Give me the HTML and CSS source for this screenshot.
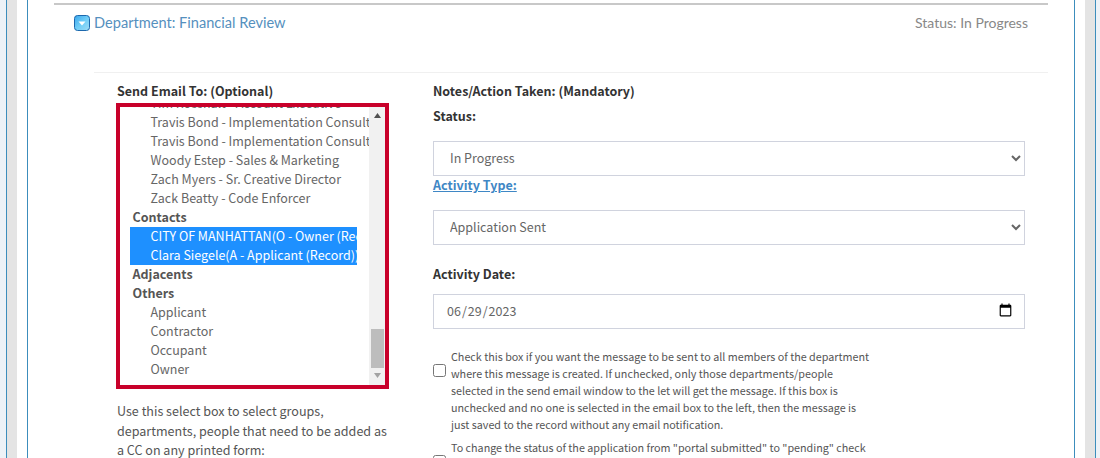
FILE: index.html
```html
<!DOCTYPE html>
<html lang="en">
<head>
    <meta charset="UTF-8"/>
    <title>Department: Financial Review</title>
    <link rel="stylesheet" href="styles.css">
</head>
<body>
<div class="page">
    <div class="shell">
        <div class="sheet">
            <div class="card">
                <div class="dept">
                    <div class="dept-head">
                        <a class="dept-title" href="#">
                            <svg class="toggle" width="16" height="16" viewBox="0 0 16 16">
                                <defs>
                                    <linearGradient id="tg" x1="0" y1="0" x2="1" y2="1">
                                        <stop offset="0" stop-color="#3aa6ec"/>
                                        <stop offset="0.5" stop-color="#6fcdf7"/>
                                        <stop offset="1" stop-color="#9fdcf5"/>
                                    </linearGradient>
                                </defs>
                                <rect x="0.5" y="0.5" width="15" height="15" rx="3" fill="url(#tg)" stroke="#1c68ad"/>
                                <path d="M4.5 6.5h7L8 10.5z" fill="#fff"/>
                            </svg>
                            Department: Financial Review
                        </a>
                        <span class="dept-status">Status: In Progress</span>
                    </div>
                    <div class="dept-body">
                        <div class="col-left">
                            <label class="lbl">Send Email To: (Optional)</label>
                            <div class="list-box">
                                <div class="list-view">
                                    <div class="list-scroll">
                                        <div class="opt">Tim Rosshalt - Account Executive</div>
                                        <div class="opt">Travis Bond - Implementation Consultant</div>
                                        <div class="opt">Travis Bond - Implementation Consultant</div>
                                        <div class="opt">Woody Estep - Sales &amp; Marketing</div>
                                        <div class="opt">Zach Myers - Sr. Creative Director</div>
                                        <div class="opt">Zack Beatty - Code Enforcer</div>
                                        <div class="grp">Contacts</div>
                                        <div class="opt sel">CITY OF MANHATTAN(O - Owner (Record))</div>
                                        <div class="opt sel">Clara Siegele(A - Applicant (Record))</div>
                                        <div class="grp">Adjacents</div>
                                        <div class="grp">Others</div>
                                        <div class="opt">Applicant</div>
                                        <div class="opt">Contractor</div>
                                        <div class="opt">Occupant</div>
                                        <div class="opt">Owner</div>
                                    </div>
                                </div>
                                <div class="scrollbar">
                                    <svg class="arrow" width="7" height="5" viewBox="0 0 7 5"><path d="M0 5L3.5 0 7 5z" fill="#505050"/></svg>
                                    <div class="thumb"></div>
                                    <svg class="arrow" width="7" height="5" viewBox="0 0 7 5"><path d="M0 0L3.5 5 7 0z" fill="#a3a3a3"/></svg>
                                </div>
                            </div>
                            <p class="help">Use this select box to select groups, departments, people that need to be added as a CC on any printed form:</p>
                        </div>
                        <div class="col-right">
                            <label class="lbl">Notes/Action Taken: (Mandatory)</label>
                            <label class="lbl lbl-status">Status:</label>
                            <select class="field select">
                                <option>In Progress</option>
                            </select>
                            <a class="lbl link" href="#">Activity Type:</a>
                            <select class="field select">
                                <option>Application Sent</option>
                            </select>
                            <label class="lbl lbl-date">Activity Date:</label>
                            <input class="field date" type="date" value="2023-06-29">
                            <div class="check-row">
                                <input type="checkbox">
                                <p>Check this box if you want the message to be sent to all members of the department where this message is created. If unchecked, only those departments/people selected in the send email window to the let will get the message. If this box is unchecked and no one is selected in the email box to the left, then the message is just saved to the record without any email notification.</p>
                            </div>
                            <div class="check-row">
                                <input type="checkbox">
                                <p>To change the status of the application from "portal submitted" to "pending" check this box and the status will change when saved.</p>
                            </div>
                        </div>
                    </div>
                </div>
            </div>
        </div>
    </div>
</div>
</body>
</html>
```

FILE: styles.css
```css
html, body {
    margin: 0;
    height: 458px;
    overflow: hidden;
}

body {
    background: #edf2f7;
    font-family: "Noto Sans CJK SC", "Noto Sans", sans-serif;
    color: #555;
    font-size: 12.5px;
}

.page {
    padding: 0 4px 0 6px;
}

.shell {
    background: #e4e4e4;
    border-left: 1px solid #3c8dbc;
    border-right: 1px solid #3c8dbc;
    padding: 0 10px;
    height: 458px;
}

.sheet {
    background: #fff;
    padding: 0 10px;
    height: 458px;
}

.card {
    border-left: 1px solid #3c8dbc;
    border-right: 1px solid #3c8dbc;
    padding: 3px 26px 0;
    height: 458px;
    box-sizing: border-box;
}

.dept {
    border-top: 2px solid #c8c8c8;
}

.dept-head {
    display: flex;
    justify-content: space-between;
    padding: 9px 20px 0 20px;
    height: 58px;
    font-family: Lato, sans-serif;
    font-size: 14px;
    line-height: 18px;
}

.dept-title {
    color: #5590be;
    font-size: 14.6px;
    text-decoration: none;
    display: flex;
    align-items: center;
    align-self: flex-start;
    gap: 4px;
}

.dept-status {
    color: #888;
}

.dept-body {
    margin-left: 40px;
    border-top: 1px solid #f0f0f0;
    display: flex;
    padding: 9px 0 0 23px;
}

.lbl {
    display: block;
    font-weight: 700;
    color: #333;
    font-size: 12.5px;
    line-height: 18px;
}

.col-left {
    width: 272px;
    margin-right: 44px;
    flex: none;
}

.list-box {
    width: 265px;
    height: 278px;
    border: 4px solid #c8002a;
    display: flex;
    margin: 3px 0 0 -1px;
}

.list-view {
    flex: 1;
    overflow: hidden;
}

.list-scroll {
    margin-top: -13px;
}

.opt, .grp {
    height: 19px;
    line-height: 17px;
    white-space: nowrap;
    overflow: hidden;
}

.opt {
    margin-left: 10px;
    padding-left: 20.5px;
    width: 218.5px;
    color: #666;
}

.grp {
    font-weight: 700;
    padding-left: 12.5px;
}

.opt.sel {
    width: 206.5px;
    background: #1e90ff;
    color: #fff;
}

.scrollbar {
    width: 16px;
    background: #f1f1f1;
    display: flex;
    flex-direction: column;
    align-items: center;
    padding: 6px 1px 7px 2px;
    box-sizing: border-box;
}

.thumb {
    width: 13px;
    height: 39px;
    background: #bdbdbd;
    margin-top: auto;
    margin-bottom: 5px;
}

.arrow {
    flex: none;
}

.help {
    margin: 12px 0 0;
    line-height: 19.7px;
    font-size: 12.55px;
    color: #555;
}

.col-right {
    width: 592px;
    flex: none;
}

.lbl-status {
    margin-top: 7px;
}

.field {
    display: block;
    width: 100%;
    height: 35px;
    box-sizing: border-box;
    border: 1px solid #d0d3de;
    border-radius: 0;
    background: #fff;
    color: #666;
    font-family: inherit;
    outline: 0;
}

.select {
    margin-top: 16px;
    padding: 0 0 2px 12px;
    font-size: 12.5px;
}

.link {
    color: #3f87c5;
    text-decoration: underline;
}

.lbl-date {
    margin-top: 20px;
}

.date {
    margin-top: 11px;
    padding: 0 11px 2px 12px;
    font-size: 12.5px;
}

.date::-webkit-calendar-picker-indicator {
    width: 15px;
    height: 15px;
    padding: 0;
}

.check-row {
    display: flex;
    align-items: flex-start;
    width: 440px;
    margin-top: 19px;
}

.check-row + .check-row {
    margin-top: 6px;
}

.check-row input {
    margin: 16px 5px 0 0;
    width: 13px;
    height: 13px;
    flex: none;
}

.check-row p {
    margin: 0;
    font-size: 10.75px;
    line-height: 17px;
    color: #555;
}
```
